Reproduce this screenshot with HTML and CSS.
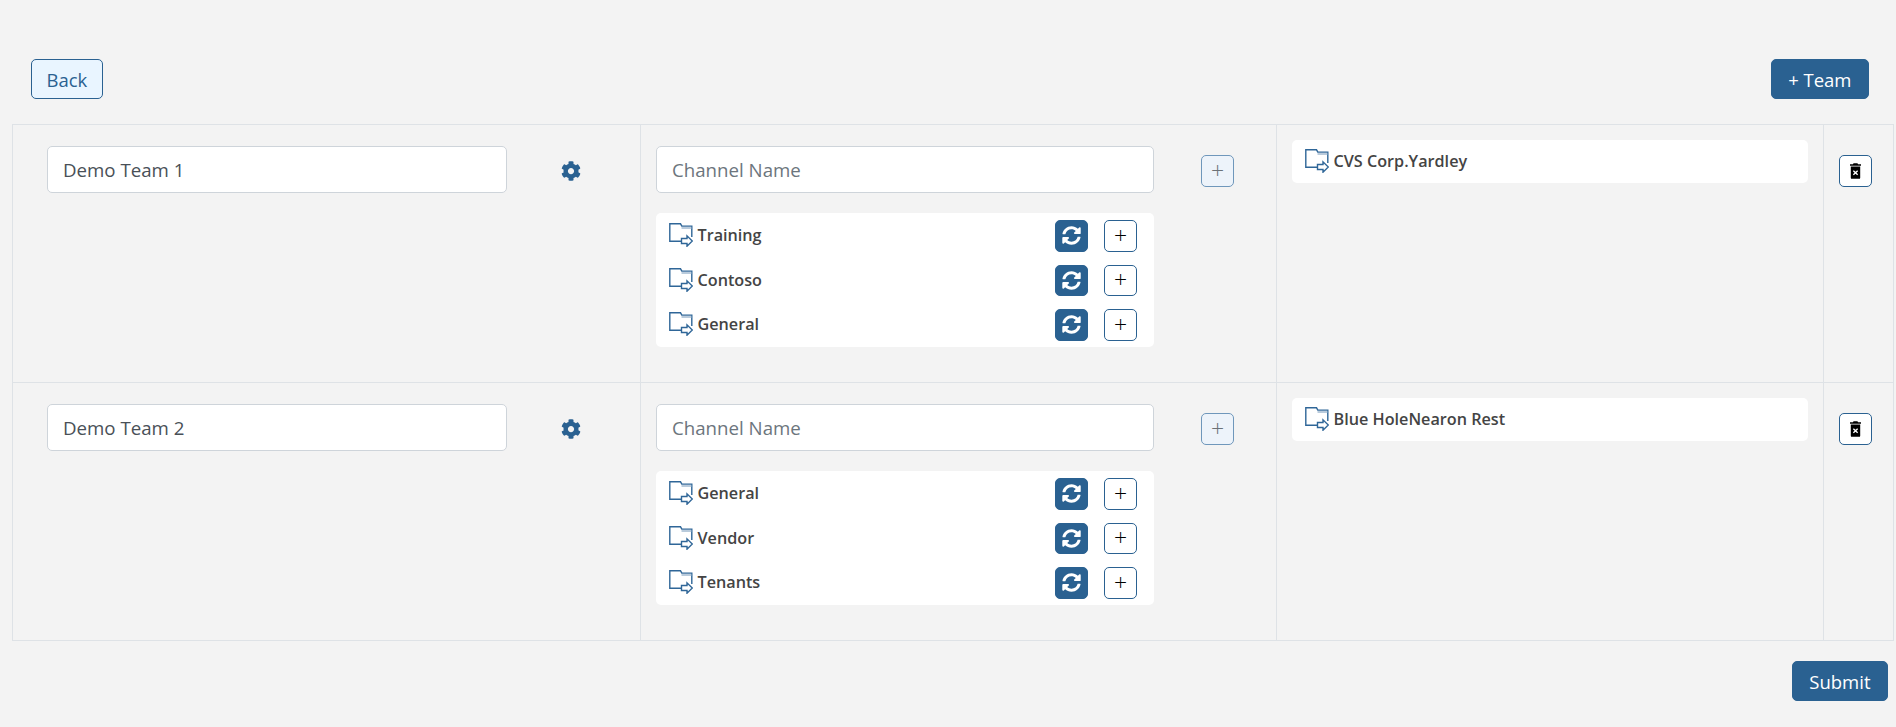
FILE: index.html
```html
<!DOCTYPE html>
<html lang="en">

<head>
    <meta charset="UTF-8">
    <meta name="viewport" content="width=device-width, initial-scale=1.0">
    <title>Teams</title>
    <link rel="stylesheet" href="styles.css">
</head>

<body>
    <svg class="sprites" width="0" height="0">
        <symbol id="folder" viewBox="0 0 24 24">
            <path d="M12.500 18.200H.8V.8H11.500L13 3.300H22.800V14" fill="none" stroke="currentColor" stroke-width="1.400" />
            <path d="M12.500 3.600H22.300V6H12.500Z" fill="#b9cbdc" />
            <path d="M12.500 15.500H18V12.800L23.300 18L18 23.200V20.500H12.500Z" fill="#fff" stroke="currentColor" stroke-width="1.400" />
        </symbol>
        <symbol id="cog" viewBox="0 0 512 512">
            <path d="M487.4 315.7l-42.6-24.6c4.3-23.2 4.3-47 0-70.2l42.6-24.6c4.9-2.8 7.1-8.6 5.5-14-11.1-35.6-30-67.8-54.7-94.6-3.8-4.1-10-5.1-14.8-2.3L380.8 110c-17.9-15.4-38.5-27.3-60.8-35.1V25.8c0-5.6-3.9-10.5-9.4-11.7-36.7-8.2-74.3-7.8-109.2 0-5.5 1.2-9.4 6.1-9.4 11.7V75c-22.2 7.9-42.8 19.8-60.8 35.1L88.7 85.5c-4.9-2.8-11-1.9-14.8 2.3-24.7 26.7-43.6 58.9-54.7 94.6-1.7 5.4.6 11.2 5.5 14L67.3 221c-4.3 23.2-4.3 47 0 70.2l-42.6 24.6c-4.9 2.8-7.1 8.6-5.5 14 11.1 35.6 30 67.8 54.7 94.6 3.8 4.1 10 5.1 14.8 2.3l42.6-24.6c17.9 15.4 38.5 27.3 60.8 35.1v49.2c0 5.6 3.9 10.5 9.4 11.7 36.7 8.2 74.3 7.8 109.2 0 5.5-1.2 9.4-6.1 9.4-11.7v-49.2c22.2-7.9 42.8-19.8 60.8-35.1l42.6 24.6c4.9 2.8 11 1.9 14.8-2.3 24.7-26.7 43.6-58.9 54.7-94.6 1.5-5.5-.7-11.3-5.6-14.1zM256 336c-44.1 0-80-35.9-80-80s35.9-80 80-80 80 35.9 80 80-35.9 80-80 80z" fill="currentColor" />
        </symbol>
        <symbol id="sync" viewBox="0 0 512 512">
            <path d="M370.72 133.28C339.458 104.008 298.888 87.962 255.848 88c-77.458.068-144.328 53.178-162.791 126.85-1.344 5.363-6.122 9.15-11.651 9.15H24.103c-7.498 0-13.194-6.807-11.807-14.176C33.933 94.924 134.813 8 256 8c66.448 0 126.791 26.136 171.315 68.685L463.03 40.97C478.149 25.851 504 36.559 504 57.941V192c0 13.255-10.745 24-24 24H345.941c-21.382 0-32.09-25.851-16.971-40.971l41.75-41.749zM32 296h134.059c21.382 0 32.09 25.851 16.971 40.971l-41.75 41.75c31.262 29.273 71.835 45.319 114.876 45.28 77.418-.07 144.315-53.144 162.787-126.849 1.344-5.363 6.122-9.15 11.651-9.15h57.304c7.498 0 13.194 6.807 11.807 14.176C478.067 417.076 377.187 504 256 504c-66.448 0-126.791-26.136-171.315-68.685L48.97 471.03C33.851 486.149 8 475.441 8 454.059V320c0-13.255 10.745-24 24-24z" fill="currentColor" />
        </symbol>
        <symbol id="trash" viewBox="0 0 14 20">
            <path fill-rule="evenodd" fill="currentColor" d="M4.500 0H9.500L10.200 1.300H14V3.200H0V1.300H3.800ZM1 4.400H13V18.500A1.500 1.500 0 0 1 11.500 20H2.500A1.500 1.500 0 0 1 1 18.500ZM4.800 9 7 11 9.200 9 10.300 10.200 8.200 12.200 10.300 14.200 9.200 15.400 7 13.400 4.800 15.400 3.700 14.200 5.800 12.200 3.700 10.200Z" />
        </symbol>
    </svg>

    <div class="top-bar">
        <button class="btn btn-outline">Back</button>
        <button class="btn btn-primary">+ Team</button>
    </div>

    <div class="team-table">
        <div class="team-row">
            <div class="cell team-cell">
                <input class="field team-input" type="text" value="Demo Team 1">
                <svg class="cog"><use href="#cog" /></svg>
            </div>
            <div class="cell channel-cell">
                <div class="channel-form">
                    <input class="field channel-input" type="text" placeholder="Channel Name">
                    <button class="icon-btn add-channel">+</button>
                </div>
                <div class="channel-list">
                    <div class="channel-item">
                        <svg class="folder"><use href="#folder" /></svg>
                        <span class="channel-name">Training</span>
                        <button class="icon-btn sync-btn"><svg><use href="#sync" /></svg></button>
                        <button class="icon-btn plus-btn">+</button>
                    </div>
                    <div class="channel-item">
                        <svg class="folder"><use href="#folder" /></svg>
                        <span class="channel-name">Contoso</span>
                        <button class="icon-btn sync-btn"><svg><use href="#sync" /></svg></button>
                        <button class="icon-btn plus-btn">+</button>
                    </div>
                    <div class="channel-item">
                        <svg class="folder"><use href="#folder" /></svg>
                        <span class="channel-name">General</span>
                        <button class="icon-btn sync-btn"><svg><use href="#sync" /></svg></button>
                        <button class="icon-btn plus-btn">+</button>
                    </div>
                </div>
            </div>
            <div class="cell folder-cell">
                <div class="folder-card">
                    <svg class="folder"><use href="#folder" /></svg>
                    <span class="channel-name">CVS Corp.Yardley</span>
                </div>
            </div>
            <div class="cell delete-cell">
                <button class="icon-btn trash-btn"><svg><use href="#trash" /></svg></button>
            </div>
        </div>

        <div class="team-row">
            <div class="cell team-cell">
                <input class="field team-input" type="text" value="Demo Team 2">
                <svg class="cog"><use href="#cog" /></svg>
            </div>
            <div class="cell channel-cell">
                <div class="channel-form">
                    <input class="field channel-input" type="text" placeholder="Channel Name">
                    <button class="icon-btn add-channel">+</button>
                </div>
                <div class="channel-list">
                    <div class="channel-item">
                        <svg class="folder"><use href="#folder" /></svg>
                        <span class="channel-name">General</span>
                        <button class="icon-btn sync-btn"><svg><use href="#sync" /></svg></button>
                        <button class="icon-btn plus-btn">+</button>
                    </div>
                    <div class="channel-item">
                        <svg class="folder"><use href="#folder" /></svg>
                        <span class="channel-name">Vendor</span>
                        <button class="icon-btn sync-btn"><svg><use href="#sync" /></svg></button>
                        <button class="icon-btn plus-btn">+</button>
                    </div>
                    <div class="channel-item">
                        <svg class="folder"><use href="#folder" /></svg>
                        <span class="channel-name">Tenants</span>
                        <button class="icon-btn sync-btn"><svg><use href="#sync" /></svg></button>
                        <button class="icon-btn plus-btn">+</button>
                    </div>
                </div>
            </div>
            <div class="cell folder-cell">
                <div class="folder-card">
                    <svg class="folder"><use href="#folder" /></svg>
                    <span class="channel-name">Blue HoleNearon Rest</span>
                </div>
            </div>
            <div class="cell delete-cell">
                <button class="icon-btn trash-btn"><svg><use href="#trash" /></svg></button>
            </div>
        </div>
    </div>

    <div class="bottom-bar">
        <button class="btn btn-primary">Submit</button>
    </div>
</body>

</html>
```

FILE: styles.css
```css
:root {
    --primary: #2a6191;
    --background: #f3f3f3;
    --line: #dee2e6;
    --text: #495057;
}

* {
    box-sizing: border-box;
    margin: 0;
    padding: 0;
    font-family: 'Open Sans', 'Noto Sans', sans-serif;
}

body {
    background: var(--background);
    color: var(--text);
    height: 727px;
    overflow: hidden;
}

.sprites {
    position: absolute;
}

.top-bar {
    display: flex;
    justify-content: space-between;
    padding: 59px 27px 25px 31px;
}

.bottom-bar {
    display: flex;
    justify-content: flex-end;
    padding: 20px 8px 0 0;
}

button {
    cursor: pointer;
}

.btn {
    height: 40px;
    padding: 0 16.500px;
    border-radius: 5px;
    border: 1px solid var(--primary);
    font-size: 18.500px;
}

.btn-outline {
    padding: 0 14.500px;
    background: #e9f5ff;
    color: var(--primary);
}

.btn-primary {
    background: var(--primary);
    color: #fff;
}

.team-table {
    margin: 0 2px 0 12px;
    border-right: 1px solid var(--line);
    border-bottom: 1px solid var(--line);
}

.team-row {
    display: grid;
    grid-template-columns: 628px 636px 547px 70px;
    height: 258px;
}

.cell {
    border-left: 1px solid var(--line);
    border-top: 1px solid var(--line);
}

.team-cell {
    display: flex;
    align-items: flex-start;
    padding: 21px 0 0 34px;
}

.field {
    height: 47px;
    padding: 0 15px;
    background: #fff;
    border: 1px solid #ced4da;
    border-radius: 5px;
    color: var(--text);
    font-size: 18.700px;
}

.field::placeholder {
    color: #6c757d;
}

.team-input {
    width: 460px;
}

.cog {
    width: 20px;
    height: 20px;
    margin: 15px 0 0 54px;
    color: var(--primary);
}

.channel-cell {
    padding: 21px 0 0 15px;
}

.channel-form {
    display: flex;
    align-items: flex-start;
}

.channel-input {
    width: 498px;
}

.icon-btn {
    display: flex;
    align-items: center;
    justify-content: center;
    width: 33px;
    height: 31.500px;
    padding-bottom: 2px;
    border-radius: 5px;
    border: 1px solid var(--primary);
    font-size: 23px;
    font-weight: 300;
}

.add-channel {
    height: 32px;
    margin: 9px 0 0 47px;
    background: #edf3fa;
    border-color: #6f97bb;
    color: #6b7177;
}

.channel-list {
    display: grid;
    gap: 13px;
    width: 498px;
    margin-top: 20px;
    padding: 7px 17px 6.500px 13px;
    background: #fff;
    border-radius: 5px;
}

.channel-item {
    display: flex;
    align-items: center;
}

.folder {
    flex: none;
    width: 24px;
    height: 24px;
    margin: -1px 4.500px 0 0;
    color: #2f6698;
}

.channel-name {
    margin-top: -1px;
    font-size: 16.200px;
    font-weight: 560;
    color: #444;
}

.sync-btn {
    margin-left: auto;
    padding-bottom: 0;
    background: var(--primary);
    color: #fff;
}

.sync-btn svg {
    width: 19px;
    height: 19px;
}

.plus-btn {
    margin-left: 16px;
    background: #fff;
    color: #000;
}

.folder-cell {
    padding: 15px 15px 0;
}

.folder-card {
    display: flex;
    align-items: center;
    height: 43px;
    padding: 0 13px;
    background: #fff;
    border-radius: 5px;
}

.delete-cell {
    padding: 30px 0 0 15px;
}

.trash-btn {
    height: 32px;
    padding-bottom: 0;
    background: #fff;
    color: #000;
}

.trash-btn svg {
    width: 11px;
    height: 16px;
}
```
